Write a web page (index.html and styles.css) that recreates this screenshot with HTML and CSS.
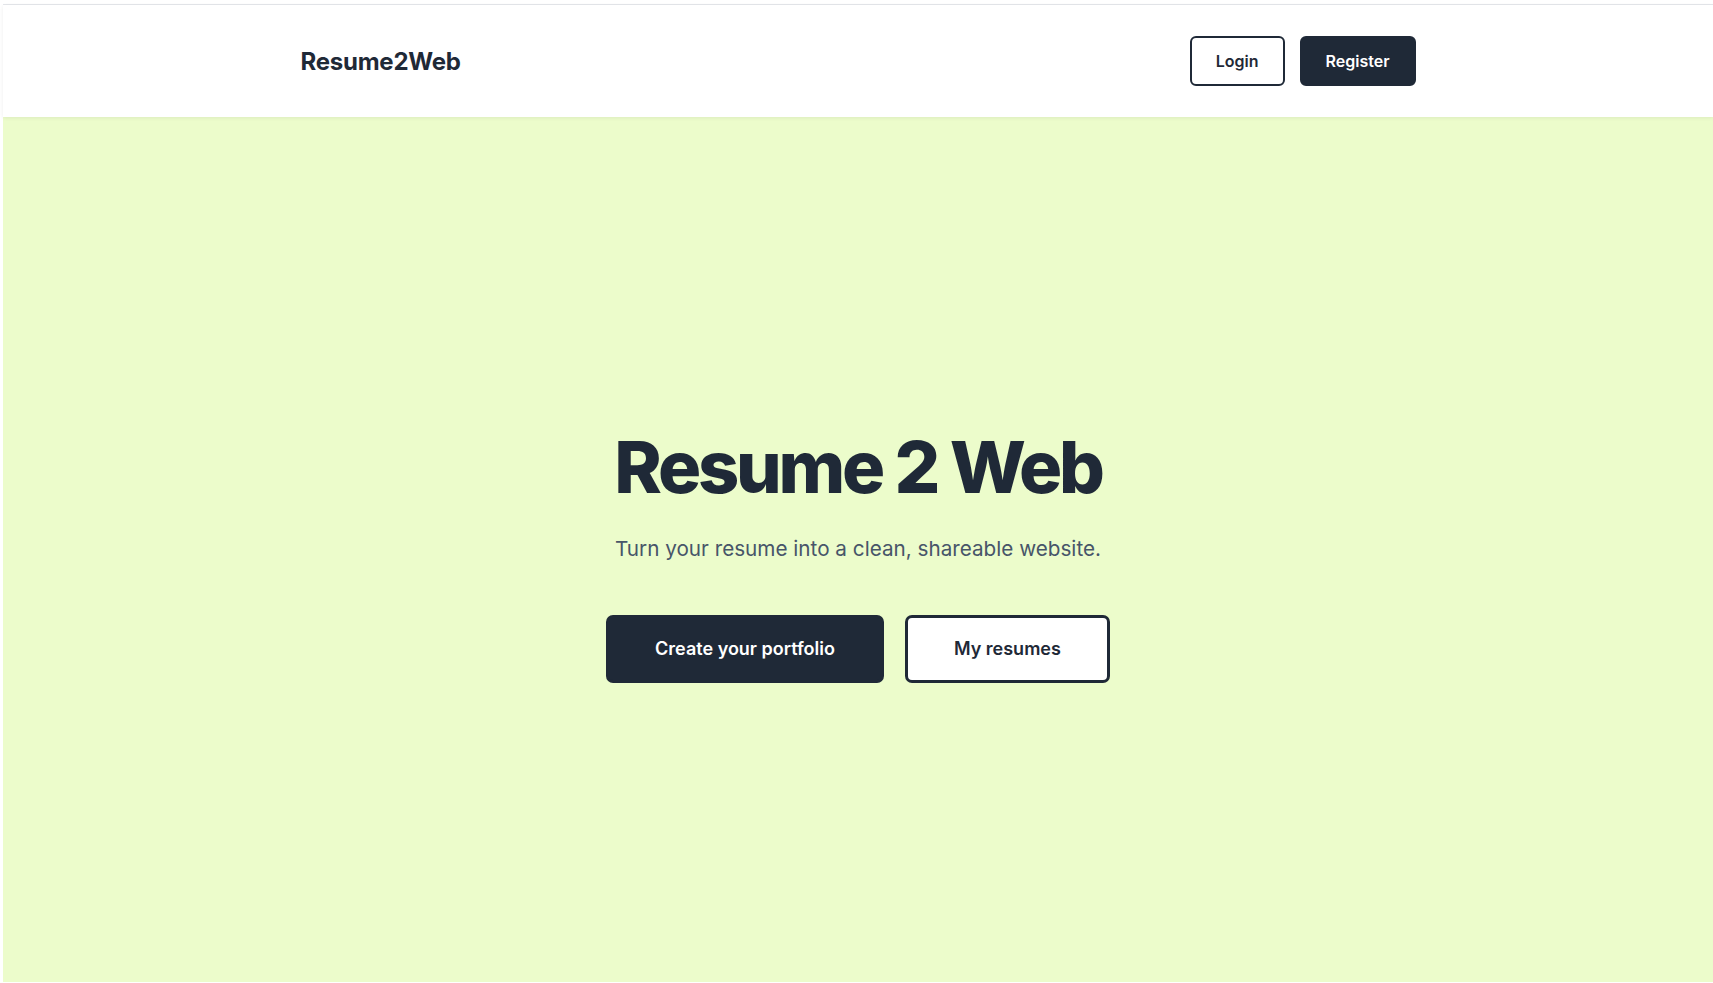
FILE: index.html
```html
<!DOCTYPE html>
<html lang="en">
<head>
  <meta charset="UTF-8">
  <title>Resume2Web</title>
  <link rel="stylesheet" href="styles.css">
</head>
<body>

<div class="frame">
  <header class="topbar">
    <div class="topbar-inner">
      <a class="logo" href="#">Resume2Web</a>
      <nav class="auth">
        <a class="btn btn-outline" href="#">Login</a>
        <a class="btn btn-dark" href="#">Register</a>
      </nav>
    </div>
  </header>

  <main class="hero">
    <div class="hero-content">
      <h1>Resume 2 Web</h1>
      <p class="tagline">Turn your resume into a clean, shareable website.</p>
      <div class="actions">
        <a class="btn btn-dark btn-lg" href="#">Create your portfolio</a>
        <a class="btn btn-outline btn-lg" href="#">My resumes</a>
      </div>
    </div>
  </main>
</div>

</body>
</html>
```

FILE: styles.css
```css
* {
  box-sizing: border-box;
}

body {
  font-family: Inter, 'Noto Sans', sans-serif;
  background-color: #fff;
  margin: 0;
  padding: 0;
  color: #1f2937;
}

.frame {
  margin: 4px 0 0 3px;
  border-top: 1px solid #e5e7eb;
}

.topbar {
  background-color: #fff;
  height: 112px;
  position: relative;
  z-index: 1;
  box-shadow: 0 1px 4px rgba(0, 0, 0, 0.07);
}

.topbar-inner {
  max-width: 1115px;
  height: 100%;
  margin: 0 auto;
  display: flex;
  align-items: center;
  justify-content: space-between;
}

.logo {
  font-size: 24px;
  font-weight: 700;
  letter-spacing: -0.01em;
  color: #1f2937;
  text-decoration: none;
}

.auth {
  display: flex;
  gap: 15px;
}

.btn {
  display: inline-block;
  font-size: 16px;
  font-weight: 600;
  line-height: 24px;
  padding: 11px 24px;
  border: 2px solid #1f2937;
  border-radius: 6px;
  text-decoration: none;
}

.btn-outline {
  background-color: #fff;
  color: #1f2937;
}

.btn-dark {
  background-color: #1f2937;
  color: #fff;
}

.hero {
  background-color: #ecfccb;
  height: 865px;
  padding-top: 14px;
  display: flex;
  align-items: center;
  justify-content: center;
}

.hero-content {
  text-align: center;
}

.hero h1 {
  margin: 0;
  font-size: 72px;
  line-height: 72px;
  font-weight: 800;
  letter-spacing: -0.045em;
  color: #1f2937;
}

.tagline {
  margin: 32px 0 0;
  font-size: 20.7px;
  line-height: 28px;
  color: #475569;
}

.actions {
  margin-top: 52px;
  display: flex;
  justify-content: center;
  gap: 21px;
}

.btn-lg {
  font-size: 18px;
  line-height: 28px;
  padding: 17px 46px;
  border-width: 3px;
  border-radius: 7px;
}
```
